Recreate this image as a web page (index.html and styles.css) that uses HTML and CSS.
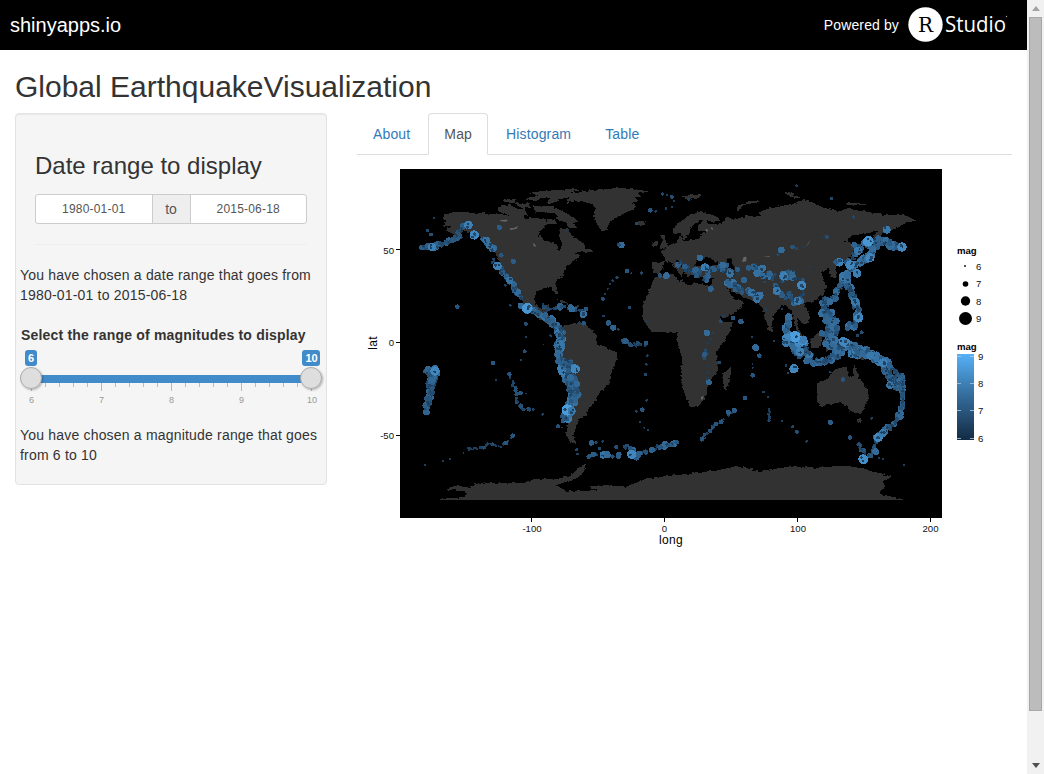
FILE: index.html
```html
<!DOCTYPE html>
<html lang="en">
<head>
<meta charset="utf-8">
<title>Global Earthquake Visualization</title>
<link rel="stylesheet" href="styles.css">
</head>
<body>
<div class="page">
  <header class="navbar">
    <span class="brand">shinyapps.io</span>
    <div class="powered"><span>Powered by</span>
      <svg class="logo" width="104" height="40" viewBox="0 -2 104 40">
        <circle cx="17.5" cy="17.5" r="17.2" fill="#fff"/>
        <text x="10" y="24.500" class="logo-r" textLength="15" lengthAdjust="spacingAndGlyphs">R</text>
        <text x="37" y="25" class="logo-word" textLength="61" lengthAdjust="spacingAndGlyphs">Studio</text>
        <circle cx="98.500" cy="9.500" r=".7" fill="#aaa"/>
      </svg>
    </div>
  </header>
  <h1 class="title">Global EarthquakeVisualization</h1>
  <div class="columns">
    <aside class="well">
      <h3 class="range-title">Date range to display</h3>
      <div class="dates"><span class="date">1980-01-01</span><span class="to">to</span><span class="date">2015-06-18</span></div>
      <div class="rule"></div>
      <p class="note date-note">You have chosen a date range that goes from<br>1980-01-01 to 2015-06-18</p>
      <p class="slider-label">Select the range of magnitudes to display</p>
      <svg class="slider" width="310" height="60" viewBox="16 347 310 60">
        <defs><filter id="sh" x="-30%" y="-30%" width="170%" height="170%"><feDropShadow dx="1" dy="1" stdDeviation="1" flood-opacity=".3"/></filter></defs>
        <rect x="31" y="375" width="280" height="8" fill="#428bca"/>
        <g id="ticks"></g>
        <rect x="25" y="350" width="12" height="16" rx="3" fill="#428bca"/>
        <rect x="302" y="350" width="18" height="16" rx="3" fill="#428bca"/>
        <text class="badge" x="31" y="362">6</text><text class="badge" x="311.500" y="362">10</text>
        <circle class="knob" cx="31" cy="378" r="10.500"/><circle class="knob" cx="311" cy="378" r="10.500"/>
        <g class="tick-text"><text x="31.500" y="402.500">6</text><text x="101.500" y="402.500">7</text><text x="171.500" y="402.500">8</text><text x="241.500" y="402.500">9</text><text x="312" y="402.500">10</text></g>
      </svg>
      <p class="note mag-note">You have chosen a magnitude range that goes<br>from 6 to 10</p>
    </aside>
    <main class="main">
      <nav class="tabs"><a class="tab">About</a><a class="tab active">Map</a><a class="tab">Histogram</a><a class="tab">Table</a></nav>
      <svg class="plot" width="655" height="390" viewBox="357 165 655 390">
        <defs>
          <filter id="coast" x="-2%" y="-2%" width="104%" height="104%"><feTurbulence type="fractalNoise" baseFrequency=".07 .14" numOctaves="3" seed="4"/><feDisplacementMap in="SourceGraphic" scale="11" xChannelSelector="R" yChannelSelector="G"/></filter>
          <linearGradient id="mag" x1="0" y1="0" x2="0" y2="1"><stop offset="0" stop-color="#56b1f7"/><stop offset=".5" stop-color="#336a98"/><stop offset="1" stop-color="#132b43"/></linearGradient>
        </defs>
        <rect x="400" y="169" width="542" height="349"/>
        <g transform="translate(400 165) scale(.33333)">
          <g class="land" filter="url(#coast)">
            <path d="M135 148L165 140 210 143 300 148 380 158 430 160 445 175 418 200 415 212 440 228 470 238 476 260 486 240 478 215 480 188 503 190 515 210 540 228 558 245 550 258 520 265 545 268 525 285 500 305 490 330 465 352 475 388 466 388 455 366 432 369 408 378 404 410 425 432 435 418 447 418 440 445 460 465 480 490 492 482 490 500 468 500 440 475 400 447 375 432 365 405 345 375 335 355 312 330 296 282 280 250 250 220 215 202 190 196 170 220 135 238 165 210 136 195 152 182 132 185 138 168 128 160Z"/>
            <path d="M295 125L325 118 350 130 375 133 385 152 350 158 320 148 295 140ZM345 115L385 112 395 130 360 128ZM305 104L350 101 345 113 312 112ZM400 120L425 125 450 122 480 135 510 150 535 170 518 170 532 190 510 190 495 172 465 160 475 150 440 142 405 140ZM378 100L430 88 440 97 400 108ZM385 84L450 75 540 72 510 84 540 84 500 100 475 103 470 112 440 114 450 100 430 95ZM418 166L442 170 435 180ZM440 160L462 165 474 178 440 177Z"/>
            <path d="M520 88L550 78 600 73 660 69 710 73 745 80 710 86 725 93 705 98 715 108 695 115 710 124 695 136 670 145 650 158 630 170 618 196 604 194 592 180 586 163 580 145 588 130 575 118 545 108 515 110 500 106Z"/>
            <path d="M490 482L520 475 545 475 565 485 590 510 590 535 650 562 652 580 635 620 630 655 600 680 585 710 568 728 560 752 540 760 528 785 520 812 530 838 510 830 498 812 505 760 510 680 490 635 470 590 468 550 482 525Z"/>
            <path d="M820 190L840 170 870 148 900 140 940 150 960 162 942 172 920 165 925 178 965 176 980 155 1000 164 1040 152 1080 152 1078 140 1110 130 1170 118 1210 105 1245 115 1270 128 1320 138 1350 132 1410 142 1460 151 1510 148 1550 168 1525 170 1510 178 1490 190 1460 195 1425 230 1416 220 1435 195 1400 205 1350 213 1335 230 1365 240 1360 265 1330 290 1308 300 1311 335 1295 336 1285 312 1265 320 1270 342 1280 365 1268 392 1240 408 1212 415 1230 455 1225 476 1210 476 1190 455 1195 490 1208 512 1200 520 1185 480 1175 438 1157 420 1140 425 1120 455 1112 490 1104 485 1085 425 1070 412 1035 398 1005 385 982 370 1000 398 1030 408 1020 432 970 462 958 450 940 410 930 385 935 355 938 338 885 337 870 318 885 303 960 300 932 279 895 282 880 306 872 328 864 340 855 320 835 285 827 285 853 317 844 334 825 305 810 288 795 292 778 328 758 328 757 292 797 290 790 270 780 260 810 240 830 232 835 215 843 211 849 230 900 220 904 203 925 198 898 198 890 186 910 168 898 165 870 190 870 203 853 225 842 203 820 208Z"/>
            <path d="M765 338L815 326 838 348 870 362 882 353 925 362 935 395 955 440 966 470 1000 472 980 520 970 532 950 560 955 615 925 655 915 700 895 722 870 726 855 690 842 635 846 578 833 535 830 500 780 500 755 502 730 465 728 420 745 380Z"/>
            <path d="M970 665L970 625 992 608 992 625 980 675ZM782 245L787 225 780 210 795 210 797 230 805 245 780 252ZM760 232L775 230 772 243 755 245ZM705 173L720 167 738 170 730 180 710 180ZM840 94L870 90 905 90 895 98 870 104ZM1005 140L1015 122 1045 110 1075 106 1075 111 1030 120 1015 138ZM1155 85L1175 82 1185 94 1215 98 1180 98ZM1335 113L1400 113 1390 119 1340 119Z"/>
            <path d="M1250 655L1285 640 1300 618 1318 608 1340 606 1345 630 1357 636 1363 598 1375 635 1385 648 1405 675 1405 702 1385 745 1365 747 1345 732 1340 720 1320 712 1290 718 1260 728 1252 710ZM1370 762L1385 762 1380 775 1372 772ZM1230 525L1260 497 1268 515 1260 550 1235 550ZM1340 562L1375 565 1400 585 1370 580 1350 575ZM1165 505L1190 535 1210 558 1200 558ZM1210 560L1250 567 1235 572ZM1275 530L1295 527 1280 565Z"/>
            <path d="M470 403L495 408 510 417 485 413ZM515 423L538 425 530 432 512 430ZM540 250L570 252 578 260 560 262ZM1100 490L1120 485 1117 503Z"/>
            <path d="M120 1002L185 997 205 985 180 978 140 973 165 962 205 967 240 953 370 955 400 943 480 942 520 925 540 905 558 895 548 930 520 944 470 960 500 980 600 975 560 965 620 960 680 965 740 940 830 930 910 922 960 915 1010 903 1080 918 1130 910 1180 905 1250 908 1330 902 1390 910 1475 935 1445 955 1455 963 1435 985 1510 1003 1510 1012 120 1012Z"/>
          </g>
          <path class="sea" d="M100 1005h1440v30h-1440zM980 281l15-1 1 16 8 10-2 25-15-2-3-20zM897 283l34-5 16 16-12 9-38-1z"/>
          <path class="lake" d="M300 165l24-1-5 6-16-1zM328 190l14-1 12-6-4 8-18 4zM399 234l6 4 3 8-7-3zM1231 224l-6 13-13 11 9-9zM1088 276l22-3-2 3zM917 193l6-1v8l-7-2zM932 185l6 4 2 6-6-2zM1031 276l8-1v14l-13 2zM903 696l8-4-2 9-6 4z"/>
          <g id="quakes"></g>
        </g>
        <path class="axis" d="M396 249.500h4M396 342.500h4M396 435.500h4M531.500 518v4M664.500 518v4M797.500 518v4M930.500 518v4"/>
        <g class="axis-text"><text x="394" y="253.500" text-anchor="end">50</text><text x="394" y="346" text-anchor="end">0</text><text x="394" y="439" text-anchor="end">-50</text>
        <g text-anchor="middle"><text x="532" y="532">-100</text><text x="664.500" y="532">0</text><text x="798" y="532">100</text><text x="930.500" y="532">200</text></g></g>
        <text class="axis-name" x="671" y="544" text-anchor="middle">long</text>
        <text class="axis-name" transform="translate(377 343) rotate(-90)" text-anchor="middle">lat</text>
        <g class="legend-title"><text x="957" y="254">mag</text><text x="957" y="350">mag</text></g>
        <circle cx="965" cy="266" r=".9"/><circle cx="965.500" cy="284" r="2.800"/><circle cx="965.500" cy="301" r="4.700"/><circle cx="965.500" cy="318.500" r="6.500"/>
        <g class="axis-text"><text x="976" y="270">6</text><text x="976" y="287">7</text><text x="976" y="304.500">8</text><text x="976" y="322">9</text><text x="978" y="360">9</text><text x="978" y="387">8</text><text x="978" y="414">7</text><text x="978" y="442">6</text></g>
        <rect x="957" y="354" width="17" height="86" fill="url(#mag)"/>
        <path class="legend-tick" d="M957 356.500h4M970 356.500h4M957 383.500h4M970 383.500h4M957 410.500h4M970 410.500h4M957 438.500h4M970 438.500h4"/>
      </svg>
    </main>
  </div>
</div>
<div class="scrollbar"><span class="arrow up"></span><span class="thumb"></span><span class="arrow down"></span></div>
<script src="map.js"></script>
</body>
</html>
```
FILE: styles.css
```css
* { box-sizing: border-box; }
body { margin: 0; height: 774px; overflow: hidden; display: flex; background: #fff; color: #333; font: 14px/20px "Liberation Sans", Arial, sans-serif; }
.page { width: 1027px; }
.navbar { height: 50px; background: #000; color: #fff; display: flex; align-items: center; justify-content: space-between; padding: 0 15px 0 10px; }
.brand { font-size: 20px; }
.powered { display: flex; align-items: center; gap: 9px; letter-spacing: .12px; }
.logo { display: block; letter-spacing: 0; overflow: visible; }
.logo-r { font: 21px "DejaVu Serif", serif; }
.logo-word { font: 22px "Open Sans", sans-serif; fill: #fff; }
.title { margin: 20px 0 10px 15px; font-size: 30px; line-height: 33px; font-weight: 400; letter-spacing: 0; }
.columns { display: flex; gap: 30px; padding-left: 15px; }
.well { width: 312px; height: 372px; background: #f5f5f5; border: 1px solid #e3e3e3; border-radius: 4px; box-shadow: inset 0 1px 1px rgba(0,0,0,.05); }
.range-title { margin: 39px 0 15px 19px; font-size: 24px; line-height: 26px; font-weight: 400; }
.dates { margin-left: 19px; width: 272px; height: 30px; display: flex; border: 1px solid #ccc; border-radius: 3px; overflow: hidden; background: #fff; }
.date { flex: 1; text-align: center; font-size: 12px; line-height: 28px; color: #555; letter-spacing: .2px; }
.to { width: 39px; text-align: center; line-height: 28px; color: #555; background: #eee; border: solid #ccc; border-width: 0 1px; }
.rule { margin: 20px 19px; height: 1px; background: #eee; }
.note { margin: 0 0 0 4px; white-space: nowrap; letter-spacing: .19px; }
.slider-label { margin: 20px 0 2px 5px; font-weight: 700; white-space: nowrap; letter-spacing: .19px; }
.slider { display: block; }
.mag-note { margin-top: 18px; }
.badge { font-size: 11px; font-weight: 700; fill: #fff; text-anchor: middle; }
.knob { fill: #dedede; stroke: #aaa; filter: url(#sh); }
.tick-text { font-size: 9px; fill: #999; text-anchor: middle; }
.main { width: 655px; }
.tabs { height: 42px; border-bottom: 1px solid #ddd; display: flex; gap: 2px; }
.tab { height: 42px; padding: 10px 15px; border: 1px solid transparent; border-radius: 4px 4px 0 0; color: #337ab7; letter-spacing: .15px; }
.active { color: #555; background: #fff; border-color: #ddd #ddd #fff; }
.plot { display: block; margin-top: 10px; }
.land { fill: #333; shape-rendering: crispEdges; }
.sea { fill: #000; }
.lake { fill: #666; }
#quakes { shape-rendering: crispEdges; }
.axis { stroke: #000; fill: none; }
.axis-text { font-size: 9.6px; fill: #111; }
.axis-name { font-size: 12px; fill: #000; letter-spacing: .3px; }
.legend-title { font-size: 9.6px; font-weight: 700; }
.legend-tick { stroke: #a9cbe6; opacity: .8; }
.scrollbar { width: 17px; background: #f1f1f1; display: flex; flex-direction: column; align-items: center; padding: 6px 0; }
.thumb { margin-top: 6px; width: 13px; height: 694px; background: #bcbcbc; border: 1px solid #a8a8a8; }
.arrow { width: 0; height: 0; border: solid transparent; border-width: 0 4px; }
.up { border-bottom: 5px solid #a3a3a3; }
.down { margin-top: auto; border-top: 5px solid #505050; }
```
FILE: map.js
```js
const NS = 'http://www.w3.org/2000/svg';
const ticks = document.getElementById('ticks');
for (let i = 0; i <= 20; i++) {
  const r = document.createElementNS(NS, 'rect');
  r.setAttribute('x', 31 + i * 14);
  r.setAttribute('y', 383);
  r.setAttribute('width', 1);
  r.setAttribute('height', i % 5 ? 4 : 8);
  r.setAttribute('fill', i % 5 ? '#bbb' : '#a5bdd2');
  ticks.appendChild(r);
}

let seed = 71;
const rnd = () => (seed = (seed * 16807) % 2147483647) / 2147483647;
const layer = document.getElementById('quakes');
function quake(x, y, r) {
  const t = Math.min(1, Math.max(.14, (r - 1) / 19));
  const c = document.createElementNS(NS, 'circle');
  c.setAttribute('cx', x.toFixed(1));
  c.setAttribute('cy', y.toFixed(1));
  c.setAttribute('r', r.toFixed(1));
  const ch = (a, b) => Math.round(a + (b - a) * t);
  c.setAttribute('fill', `rgb(${ch(19, 86)},${ch(43, 177)},${ch(67, 247)})`);
  layer.appendChild(c);
}
// Fault belts: points, half width, number of events, largest radius
const belts = [
  [[70,246,100,245,125,238,160,226,182,212], 5, 60, 10],
  [[165,215,195,175], 4, 10, 8],
  [[252,220,268,242,285,260], 6, 18, 11],
  [[278,285,295,303,310,326,330,350,348,378,365,405], 6, 48, 10],
  [[362,422,385,432,420,446,450,465,470,490,485,510], 7, 95, 12],
  [[482,490,479,530,477,575,497,630,515,665,522,690,505,735,495,765], 9, 220, 13],
  [[507,590,515,640,531,680,515,720], 10, 95, 11],
  [[440,440,475,428,500,430,535,432,560,446], 6, 14, 9],
  [[430,420,445,440], 5, 8, 7],
  [[78,618,108,615,90,650,90,690,78,740], 7, 150, 10],
  [[82,625,105,625,98,670,86,720], 8, 70, 10],
  [[332,628,342,660,350,710,365,732,408,735], 5, 20, 7],
  [[205,850,235,852,265,836,300,848,338,812], 4, 22, 7],
  [[563,870,585,870,610,870,630,870,660,873], 7, 14, 10],
  [[675,842,700,857,698,868,712,873,745,857,780,845,830,832], 5, 46, 10],
  [[905,825,930,792,955,775,1005,735], 4, 14, 7],
  [[670,528,700,540,740,538], 5, 18, 7],
  [[840,290,856,310,875,322,900,330,920,340], 9, 30, 9],
  [[890,310,930,315,965,305,990,325,1015,320], 11, 30, 9],
  [[985,350,1005,370,1025,378,1060,382,1085,400], 9, 36, 11],
  [[1060,300,1085,320,1110,340,1145,335,1175,325,1205,355], 13, 44, 11],
  [[1120,365,1145,380,1175,395,1190,415,1210,390], 11, 34, 9],
  [[1165,455,1160,490,1175,525,1190,560,1230,585], 8, 75, 12],
  [[1170,510,1210,530,1225,565], 9, 30, 16],
  [[1240,592,1270,588,1310,573,1330,560], 9, 75, 11],
  [[1275,405,1275,440,1295,470,1285,500,1280,530,1310,550], 12, 140, 11],
  [[1290,455,1308,490,1302,530,1320,545,1350,540], 10, 110, 11],
  [[1275,410,1300,400,1320,365,1335,345], 8, 50, 11],
  [[1330,345,1345,315,1370,300,1395,285,1410,270,1425,245,1445,225,1475,240,1500,245], 7, 135, 12],
  [[1345,290,1375,260,1395,235,1440,225], 9, 40, 11],
  [[1340,335,1350,375,1365,400,1375,445,1370,470,1340,490], 8, 85, 12],
  [[1320,535,1350,545,1370,565,1400,560,1425,580,1460,600], 12, 160, 12],
  [[1460,595,1470,640,1490,665,1510,645], 12, 110, 11],
  [[1460,600,1490,625,1510,635,1510,680,1512,710,1500,750,1475,785,1455,795,1435,815], 6, 120, 10],
  [[1435,810,1425,850,1410,875], 6, 20, 9],
  [[1375,835,1390,860,1405,875], 5, 13, 7],
  [[925,525,912,560,925,610,926,655], 7, 8, 6],
  [[1107,733,1108,770], 4, 9, 5]
];
for (const [p, width, n, max] of belts) {
  const segments = p.length / 2 - 1;
  const list = [];
  for (let i = 0; i < n; i++) {
    const s = i / n * segments, k = Math.floor(s) * 2, f = s % 1;
    const dx = (rnd() + rnd() - 1) * width * 1.3, dy = (rnd() + rnd() - 1) * width * 1.3;
    const x = Math.min(1508, p[k] + (p[k + 2] - p[k]) * f + dx);
    const y = p[k + 1] + (p[k + 3] - p[k + 1]) * f + dy;
    list.push([x, y, 3.2 + (max - 3) * Math.pow(rnd(), 1.9), rnd()]);
  }
  list.sort((a, b) => a[3] - b[3]).forEach(q => quake(q[0], q[1], q[2]));
}
// Single events: x, y, radius
const events = [
  [102,160,3],[83,197,5],[93,209,6],[205,180,13],[223,210,14],[258,226,11],[268,242,11],[298,187,8],[292,303,13],[340,289,8],[304,271,7],[329,346,11],[172,425,7],[331,421,4],[378,477,6],[378,516,3],[316,361,4],[382,430,16],[503,113,3],[500,198,3],[452,512,4],[485,425,6],[515,432,10],[96,246,13],
  [787,87,5],[816,96,6],[801,90,3],[822,109,3],[798,131,4],[816,127,4],[866,104,4],[751,136,7],[767,139,4],[711,177,5],[664,240,10],[657,240,6],[682,318,7],[694,325,3],[724,324,5],[651,338,5],[638,347,4],[630,357,3],[623,371,3],[616,387,3],[609,402,6],[688,427,5],[611,453,4],[625,474,8],[640,488,9],[655,493,4],[676,528,8],[799,332,10],[780,332,7],[900,279,10],[915,307,12],[932,372,9],[968,300,10],[990,327,11],[1012,313,8],[1046,309,8],[1032,345,9],[1055,382,11],[1071,403,11],[740,469,3],[971,453,4],[962,469,6],[1000,459,7],[1023,470,8],[921,504,10],[940,504,4],[1056,517,3],[888,314,9],[848,345,3],[855,305,8],[550,448,11],[559,432,7],[551,475,7],[538,473,4],
  [1190,62,4],[1294,101,5],[1361,156,5],[1281,216,6],[1266,217,3],[1178,246,7],[1190,250,5],[1209,247,3],[1144,255,10],[1134,268,5],[1460,194,12],[1405,229,16],[1506,246,14],[1318,292,13],[1308,291,8],[1350,300,14],[1410,278,14],[1371,325,13],[1365,410,12],[1376,459,14],[1290,410,10],[1193,408,12],[1205,361,14],[1151,334,13],[1130,378,12],[1087,310,11],[1231,306,3],[1098,434,4],[1146,432,3],[1122,528,4],[1343,490,8],[1385,502,6],[1372,512,5],[1165,455,10],[1185,515,17],[1160,520,14],[1363,240,9],[1374,258,12],[1337,534,14],[1265,505,9],
  [280,594,7],[288,646,3],[374,559,6],[363,585,4],[362,684,7],[378,686,3],[428,748,4],[431,538,2],[76,900,4],[129,888,3],[150,882,3],[191,864,3],[207,855,4],[338,812,7],[474,784,6],[486,788,3],[531,855,5],[533,867,4],[526,612,14],[502,735,17],[515,738,12],[512,638,10],[105,618,14],
  [742,572,4],[739,598,4],[737,628,5],[740,706,4],[727,734,7],[709,739,4],[720,771,3],[733,788,3],[744,796,4],[574,834,8],[588,832,5],[608,829,4],[598,850,5],[649,846,6],[610,870,11],[622,870,10],[695,868,14],[655,874,8],[781,845,7],[800,838,4],[817,836,3],[830,832,7],[907,821,7],[949,777,7],[964,770,7],[985,742,8],[1003,736,8],[1036,699,7],[1058,631,7],[1058,608,3],[1058,597,3],[1067,548,10],[1078,572,7],[913,569,8],[927,652,9],[958,592,5],
  [1158,602,4],[1164,624,4],[1182,611,14],[1220,588,10],[1239,595,9],[1291,772,8],[1290,622,4],[1329,644,7],[1415,760,4],[1091,681,4],[1105,696,4],[1146,768,3],[1179,786,5],[1191,801,6],[1220,829,4],[1350,818,7],[1377,838,6],[1390,883,15],[1413,874,7],[1437,880,3],[1450,882,3],[1512,901,3],[1435,817,14],[1448,805,12],[1427,860,10],[1450,593,13],[1470,661,11],[1200,560,13],[1225,587,9],[1330,530,14],[1305,525,11],[1158,534,12]
];
for (const [x, y, r] of events) {
  quake(x, y, r);
  if (r >= 11) {
    for (let i = 0; i < 2; i++) quake(x + (rnd() - .5) * r, y + (rnd() - .5) * r, 2.5 + rnd() * 3);
  }
}
```
